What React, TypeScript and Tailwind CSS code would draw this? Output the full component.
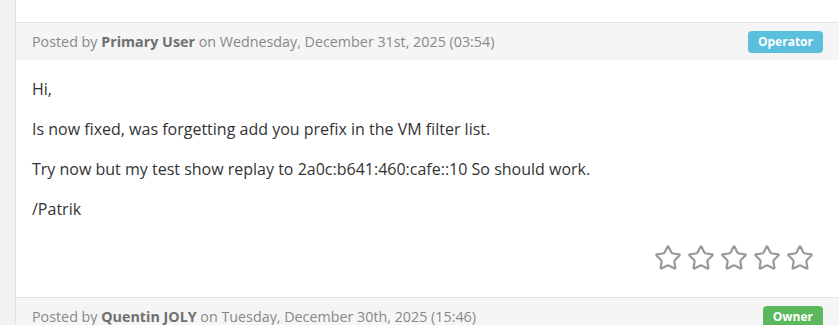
import { Star } from 'lucide-react';

function PostHeader({ name, date, role, badge }: { name: string; date: string; role: string; badge: string }) {
  return (
    <div className="flex h-[38px] items-center justify-between border-t border-[#e3e3e3] bg-[#f5f5f5] px-4 text-[14.3px] text-[#888]">
      <div>
        Posted by <span className="font-bold text-[#6f6f6f]">{name}</span> on {date}
      </div>
      <span className={`rounded-[4px] px-[10px] py-[3px] text-[12px] leading-[16px] font-bold text-white ${badge}`}>{role}</span>
    </div>
  );
}

export default function App() {
  return (
    <main className="flex h-[325px] w-full overflow-hidden bg-white font-['Open_Sans',sans-serif]">
      <div className="w-[16px] shrink-0 border-r border-[#e3e3e3] bg-[#f2f2f2]" />
      <div className="flex-1">
        <div className="h-[22px]" />
        <PostHeader
          name="Primary User"
          date="Wednesday, December 31st, 2025 (03:54)"
          role="Operator"
          badge="bg-[#5bc0de]"
        />
        <div className="px-4 pt-[19px] text-[16px] leading-5 text-[#333]">
          <p className="mb-5">Hi,</p>
          <p className="mb-5">Is now fixed, was forgetting add you prefix in the VM filter list.</p>
          <p className="mb-5">Try now but my test show replay to 2a0c:b641:460:cafe::10 So should work.</p>
          <p>/Patrik</p>
          <div className="flex h-[78px] items-start justify-end gap-[5px] pt-[25px] pr-[9px]">
            {[0, 1, 2, 3, 4].map((i) => (
              <Star key={i} size={28} strokeWidth={1.9} className="text-[#9a9a9a]" />
            ))}
          </div>
        </div>
        <PostHeader
          name="Quentin JOLY"
          date="Tuesday, December 30th, 2025 (15:46)"
          role="Owner"
          badge="bg-[#5cb85c]"
        />
      </div>
    </main>
  );
}
